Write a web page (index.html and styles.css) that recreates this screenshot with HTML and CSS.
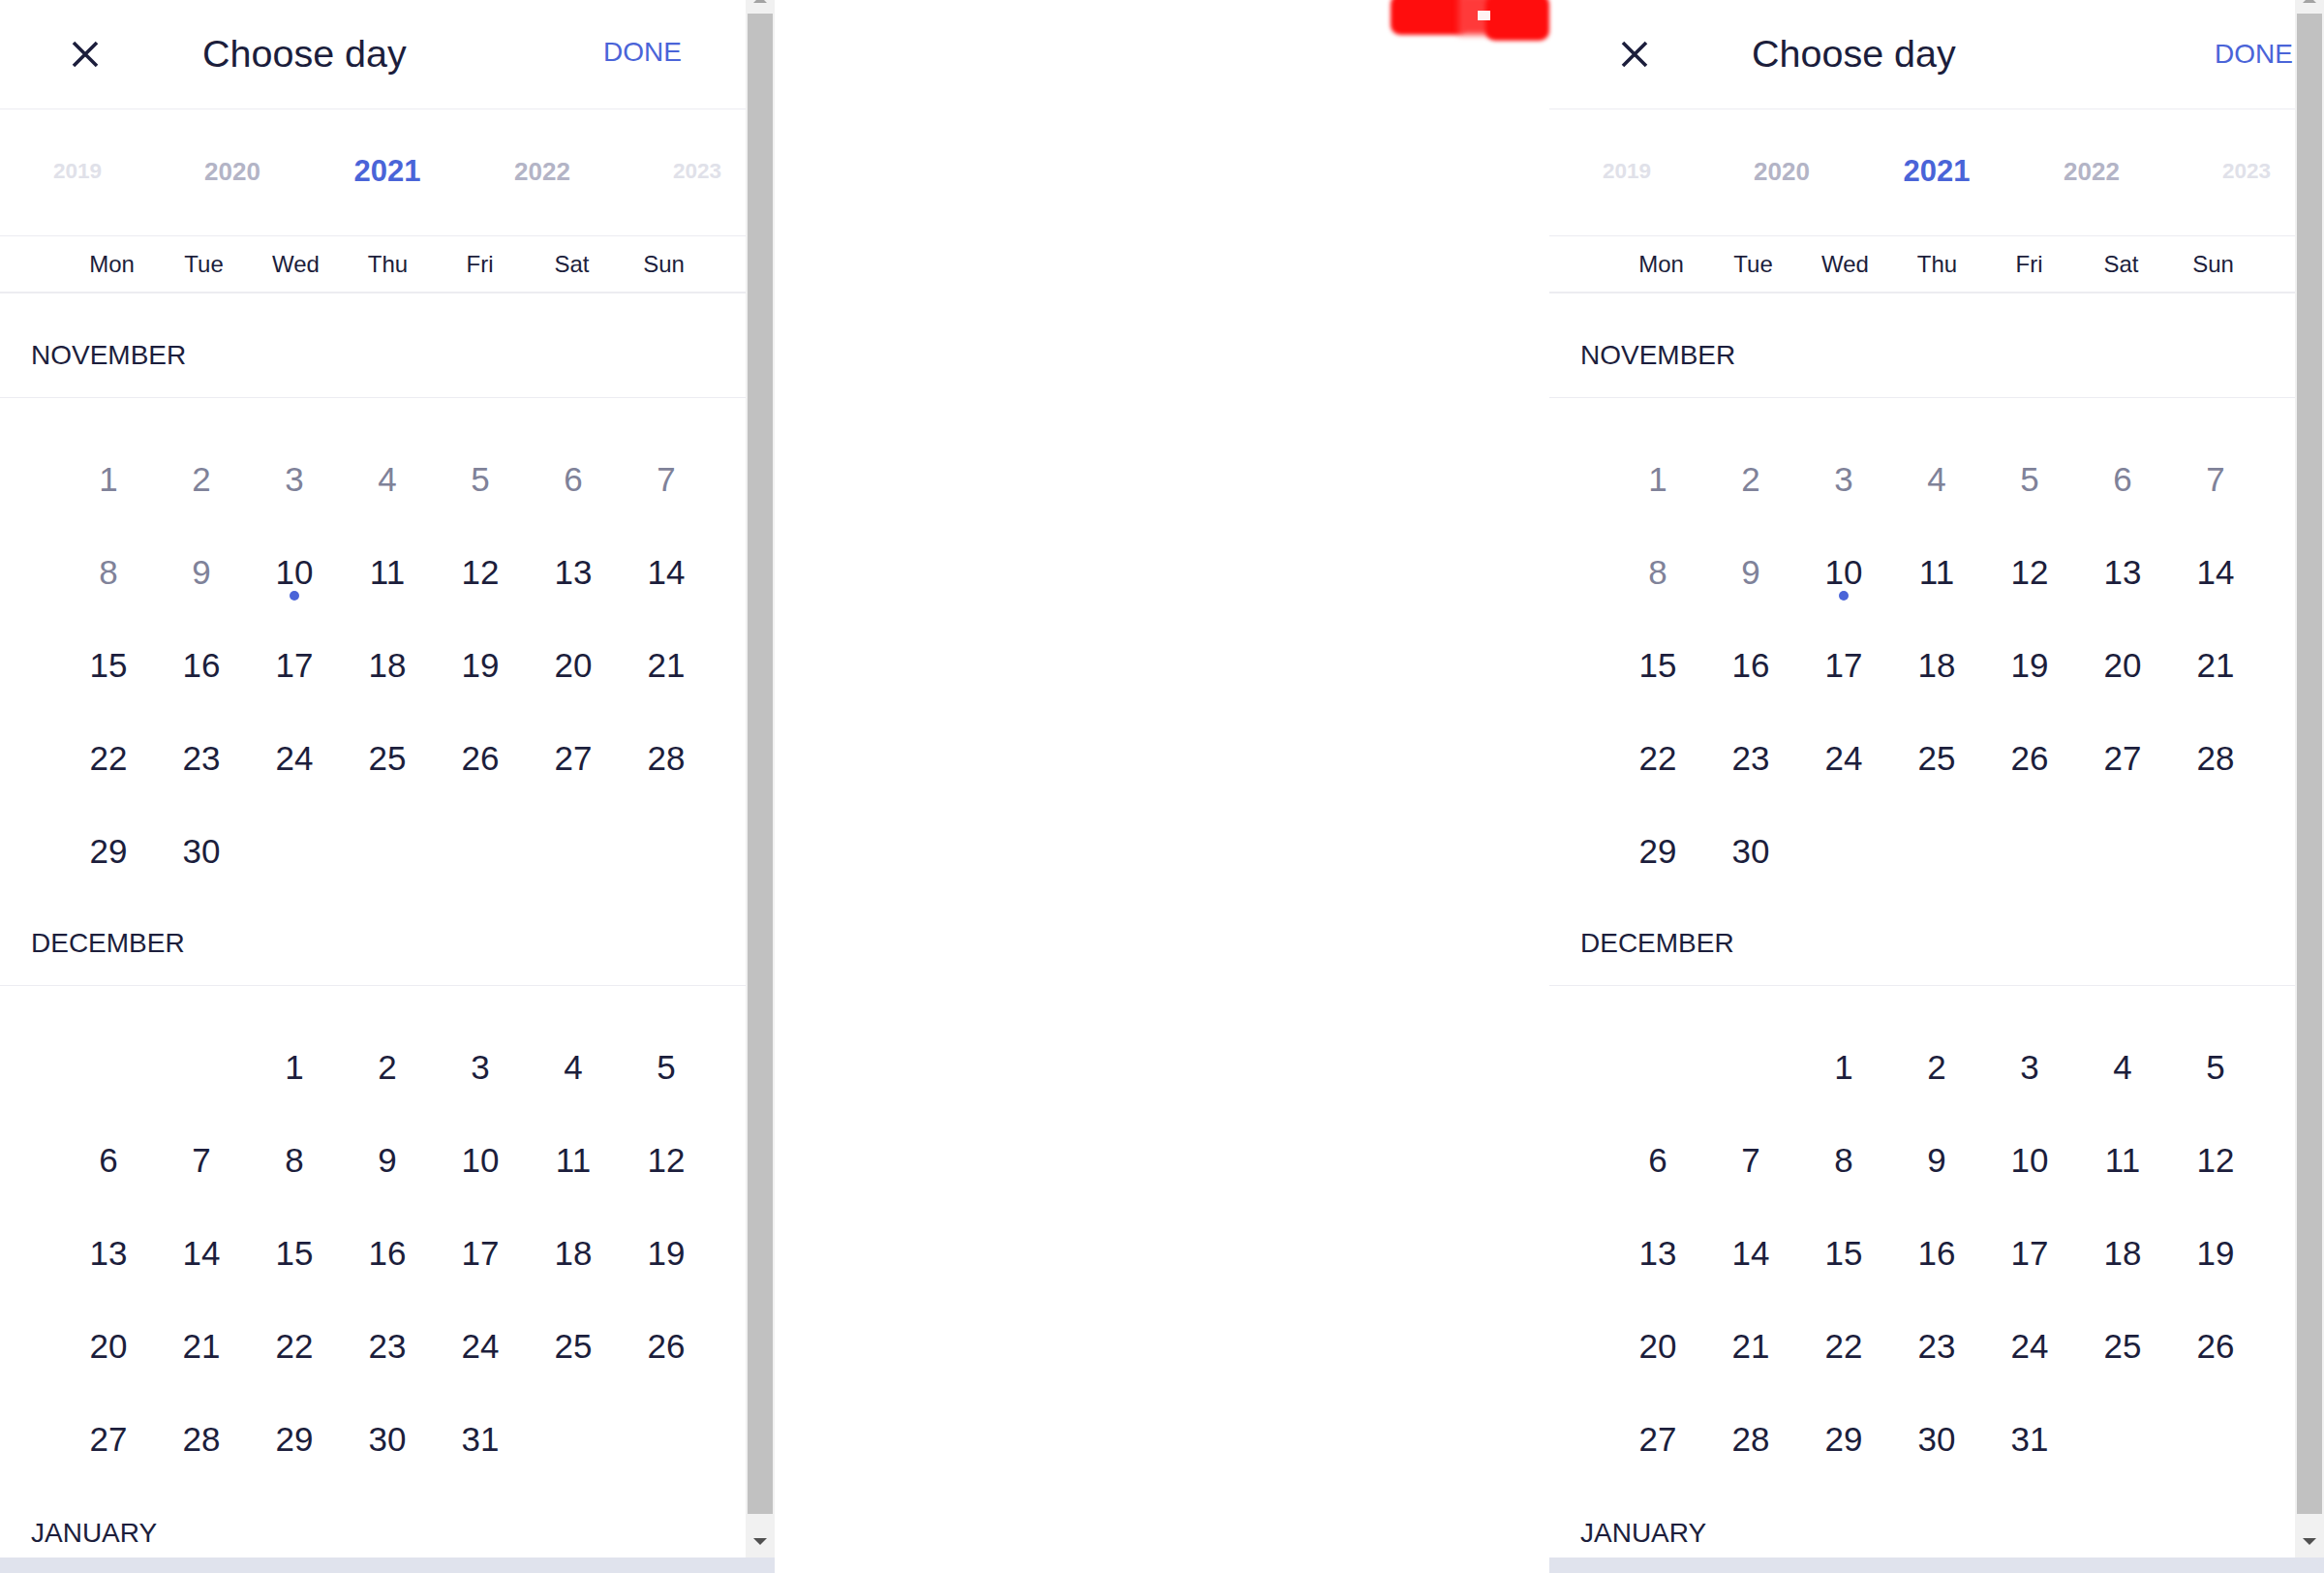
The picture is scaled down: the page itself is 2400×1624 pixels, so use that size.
FILE: index.html
```html
<!DOCTYPE html>
<html lang="en">
<head>
<meta charset="utf-8">
<title>Choose day</title>
<link rel="stylesheet" href="styles.css">
</head>
<body>
<div class="stage">

  <section class="panel">
    <div class="frame">
      <div class="sheet">
        <header class="topbar">
          <svg class="close" viewBox="0 0 28 28" aria-label="Close"><path d="M2 2 L26 26 M26 2 L2 26" /></svg>
          <h1 class="title">Choose day</h1>
          <span class="done done-left">DONE</span>
        </header>
        <div class="years">
          <span class="year far">2019</span>
          <span class="year near">2020</span>
          <span class="year current">2021</span>
          <span class="year near">2022</span>
          <span class="year far">2023</span>
        </div>
        <div class="weekdays">
          <span>Mon</span><span>Tue</span><span>Wed</span><span>Thu</span><span>Fri</span><span>Sat</span><span>Sun</span>
        </div>
        <div class="months">
          <section class="month">
            <h2 class="month-name">NOVEMBER</h2>
            <div class="days">
              <span class="day past">1</span><span class="day past">2</span><span class="day past">3</span><span class="day past">4</span><span class="day past">5</span><span class="day past">6</span><span class="day past">7</span>
              <span class="day past">8</span><span class="day past">9</span><span class="day today">10</span><span class="day">11</span><span class="day">12</span><span class="day">13</span><span class="day">14</span>
              <span class="day">15</span><span class="day">16</span><span class="day">17</span><span class="day">18</span><span class="day">19</span><span class="day">20</span><span class="day">21</span>
              <span class="day">22</span><span class="day">23</span><span class="day">24</span><span class="day">25</span><span class="day">26</span><span class="day">27</span><span class="day">28</span>
              <span class="day">29</span><span class="day">30</span>
            </div>
          </section>
          <section class="month">
            <h2 class="month-name">DECEMBER</h2>
            <div class="days">
              <span class="day start-wed">1</span><span class="day">2</span><span class="day">3</span><span class="day">4</span><span class="day">5</span>
              <span class="day">6</span><span class="day">7</span><span class="day">8</span><span class="day">9</span><span class="day">10</span><span class="day">11</span><span class="day">12</span>
              <span class="day">13</span><span class="day">14</span><span class="day">15</span><span class="day">16</span><span class="day">17</span><span class="day">18</span><span class="day">19</span>
              <span class="day">20</span><span class="day">21</span><span class="day">22</span><span class="day">23</span><span class="day">24</span><span class="day">25</span><span class="day">26</span>
              <span class="day">27</span><span class="day">28</span><span class="day">29</span><span class="day">30</span><span class="day">31</span>
            </div>
          </section>
          <section class="month">
            <h2 class="month-name month-next">JANUARY</h2>
          </section>
        </div>
      </div>
      <div class="scrollbar">
        <div class="sb-up"><svg viewBox="0 0 30 14" width="30" height="14"><polygon points="8,3 22,3 15,-4" /></svg></div>
        <div class="sb-thumb"></div>
        <div class="sb-down"><svg viewBox="0 0 30 45" width="30" height="45"><polygon points="8,25 22,25 15,32" /></svg></div>
      </div>
    </div>
    <div class="strip"></div>
  </section>

  <div class="gap">
    <div class="redact">
      <span class="blot blot-a"></span>
      <span class="blot blot-mid"></span>
      <span class="blot blot-b"></span>
      <span class="blot-mark"></span>
    </div>
  </div>

  <section class="panel">
    <div class="frame">
      <div class="sheet">
        <header class="topbar">
          <svg class="close" viewBox="0 0 28 28" aria-label="Close"><path d="M2 2 L26 26 M26 2 L2 26" /></svg>
          <h1 class="title">Choose day</h1>
          <span class="done done-right">DONE</span>
        </header>
        <div class="years">
          <span class="year far">2019</span>
          <span class="year near">2020</span>
          <span class="year current">2021</span>
          <span class="year near">2022</span>
          <span class="year far">2023</span>
        </div>
        <div class="weekdays">
          <span>Mon</span><span>Tue</span><span>Wed</span><span>Thu</span><span>Fri</span><span>Sat</span><span>Sun</span>
        </div>
        <div class="months">
          <section class="month">
            <h2 class="month-name">NOVEMBER</h2>
            <div class="days">
              <span class="day past">1</span><span class="day past">2</span><span class="day past">3</span><span class="day past">4</span><span class="day past">5</span><span class="day past">6</span><span class="day past">7</span>
              <span class="day past">8</span><span class="day past">9</span><span class="day today">10</span><span class="day">11</span><span class="day">12</span><span class="day">13</span><span class="day">14</span>
              <span class="day">15</span><span class="day">16</span><span class="day">17</span><span class="day">18</span><span class="day">19</span><span class="day">20</span><span class="day">21</span>
              <span class="day">22</span><span class="day">23</span><span class="day">24</span><span class="day">25</span><span class="day">26</span><span class="day">27</span><span class="day">28</span>
              <span class="day">29</span><span class="day">30</span>
            </div>
          </section>
          <section class="month">
            <h2 class="month-name">DECEMBER</h2>
            <div class="days">
              <span class="day start-wed">1</span><span class="day">2</span><span class="day">3</span><span class="day">4</span><span class="day">5</span>
              <span class="day">6</span><span class="day">7</span><span class="day">8</span><span class="day">9</span><span class="day">10</span><span class="day">11</span><span class="day">12</span>
              <span class="day">13</span><span class="day">14</span><span class="day">15</span><span class="day">16</span><span class="day">17</span><span class="day">18</span><span class="day">19</span>
              <span class="day">20</span><span class="day">21</span><span class="day">22</span><span class="day">23</span><span class="day">24</span><span class="day">25</span><span class="day">26</span>
              <span class="day">27</span><span class="day">28</span><span class="day">29</span><span class="day">30</span><span class="day">31</span>
            </div>
          </section>
          <section class="month">
            <h2 class="month-name month-next">JANUARY</h2>
          </section>
        </div>
      </div>
      <div class="scrollbar">
        <div class="sb-up"><svg viewBox="0 0 30 14" width="30" height="14"><polygon points="8,3 22,3 15,-4" /></svg></div>
        <div class="sb-thumb"></div>
        <div class="sb-down"><svg viewBox="0 0 30 45" width="30" height="45"><polygon points="8,25 22,25 15,32" /></svg></div>
      </div>
    </div>
    <div class="strip"></div>
  </section>

</div>
</body>
</html>
```

FILE: styles.css
```css
html, body {
  margin: 0;
  padding: 0;
  background: #ffffff;
}

body {
  font-family: "Liberation Sans", Arial, sans-serif;
  color: #1c1e3c;
}

.stage {
  display: flex;
  width: 2400px;
  height: 1624px;
  overflow: hidden;
}

.panel {
  width: 800px;
  height: 1624px;
  display: flex;
  flex-direction: column;
  flex: 0 0 800px;
}

.frame {
  height: 1608px;
  display: flex;
}

.sheet {
  width: 770px;
  height: 1608px;
  overflow: hidden;
  background: #ffffff;
}

.strip {
  height: 16px;
  background: #e0e3ed;
}

.gap {
  flex: 0 0 800px;
  position: relative;
}

/* header */
.topbar {
  height: 112px;
  display: flex;
  align-items: center;
  border-bottom: 1px solid #ececf1;
}

.close {
  width: 28px;
  height: 28px;
  margin-left: 74px;
  flex: 0 0 28px;
}

.close path {
  stroke: #1c1e3c;
  stroke-width: 3.6;
  fill: none;
}

.title {
  margin: 0 0 2px 107px;
  font-size: 39.5px;
  font-weight: normal;
  line-height: 46px;
}

.done {
  margin-left: auto;
  font-size: 28px;
  line-height: 32px;
  color: #4a64d8;
}

.done-left {
  margin-right: 66px;
  margin-bottom: 4px;
}

.done-right {
  margin-right: 2px;
  margin-bottom: 0;
}

/* year wheel */
.years {
  height: 128px;
  padding-bottom: 2px;
  display: flex;
  align-items: center;
  border-bottom: 1px solid #ececf1;
}

.year {
  flex: 0 0 160px;
  text-align: center;
  font-weight: bold;
}

.year.far {
  font-size: 22.5px;
  color: #e0e1e9;
}

.year.near {
  font-size: 26px;
  color: #b3b4c6;
}

.year.current {
  font-size: 31px;
  color: #4a64d8;
}

/* weekday header */
.weekdays {
  height: 57px;
  display: grid;
  grid-template-columns: repeat(7, 95px);
  padding-left: 68px;
  align-items: center;
  justify-items: center;
  font-size: 24px;
  border-bottom: 2px solid #ececf1;
}

/* months */
.months {
  padding-top: 16px;
}

.month-name {
  margin: 0;
  padding: 32px 0 27px 32px;
  font-size: 28px;
  font-weight: normal;
  line-height: 32px;
  border-bottom: 1px solid #ececf1;
}

.month-name.month-next {
  padding-top: 34px;
}

.days {
  display: grid;
  grid-template-columns: repeat(7, 96px);
  grid-auto-rows: 96px;
  padding: 35px 0 0 64px;
}

.day {
  font-size: 35px;
  line-height: 94px;
  padding-top: 2px;
  text-align: center;
  position: relative;
}

.day.past {
  color: #7f8299;
}

.day.start-wed {
  grid-column-start: 3;
}

.day.today::after {
  content: "";
  position: absolute;
  left: 50%;
  top: 68px;
  width: 10px;
  height: 10px;
  margin-left: -5px;
  border-radius: 50%;
  background: #4a64d8;
}

/* scrollbar */
.scrollbar {
  width: 30px;
  flex: 0 0 30px;
  background: #f1f1f1;
  display: flex;
  flex-direction: column;
}

.sb-up {
  height: 14px;
  overflow: hidden;
}

.sb-up svg, .sb-down svg {
  display: block;
}

.sb-up polygon {
  fill: #a3a3a3;
}

.sb-thumb {
  flex: 1;
  margin: 0 2px;
  background: #c1c1c1;
}

.sb-down {
  height: 45px;
}

.sb-down polygon {
  fill: #505050;
}

/* redaction blot over the top edge */
.redact {
  position: absolute;
  top: -6px;
  left: 634px;
  width: 166px;
  height: 50px;
}

.blot {
  position: absolute;
  background: #ff0d0d;
  filter: blur(2px);
}

.blot-a {
  left: 2px;
  top: 0;
  width: 78px;
  height: 42px;
  border-radius: 10px;
}

.blot-mid {
  left: 72px;
  top: 0;
  width: 36px;
  height: 42px;
  background: #ff3a3a;
  filter: blur(3px);
}

.blot-b {
  left: 100px;
  top: 0;
  width: 66px;
  height: 48px;
  border-radius: 10px;
}

.blot-mark {
  position: absolute;
  left: 92px;
  top: 17px;
  width: 13px;
  height: 10px;
  background: #fff4f4;
}
```
